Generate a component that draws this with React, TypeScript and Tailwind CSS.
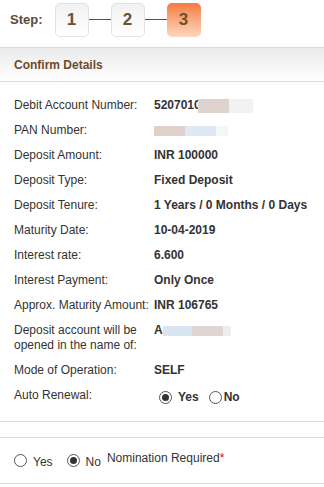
import React from 'react'

const rows: { label: React.ReactNode; value: React.ReactNode; tall?: boolean }[] = [
  {
    label: 'Debit Account Number:',
    value: (
      <span className="flex items-center">
        <span>520701</span>
        <span className="inline-block w-[4px] overflow-hidden">0</span>
        <span className="inline-block w-[31px] h-[14px] bg-[#dfd3cf]" />
        <span className="inline-block w-[24px] h-[14px] bg-[#f1f2f2]" />
      </span>
    ),
  },
  {
    label: 'PAN Number:',
    value: (
      <span className="flex items-center h-[15px]">
        <span className="inline-block w-[31px] h-[10px] bg-[#dfd0ca]" />
        <span className="inline-block w-[31px] h-[10px] bg-[#dfe9f2]" />
        <span className="inline-block w-[12px] h-[10px] bg-[#f2f9f2]" />
      </span>
    ),
  },
  { label: 'Deposit Amount:', value: 'INR 100000' },
  { label: 'Deposit Type:', value: 'Fixed Deposit' },
  { label: 'Deposit Tenure:', value: '1 Years / 0 Months / 0 Days' },
  { label: 'Maturity Date:', value: '10-04-2019' },
  { label: 'Interest rate:', value: '6.600' },
  { label: 'Interest Payment:', value: 'Only Once' },
  { label: 'Approx. Maturity Amount:', value: 'INR 106765' },
  {
    label: (
      <>
        Deposit account will be
        <br />
        opened in the name of:
      </>
    ),
    value: (
      <span className="flex items-center">
        <span>A</span>
        <span className="inline-block w-[29px] h-[10px] bg-[#d8e4f0]" />
        <span className="inline-block w-[31px] h-[10px] bg-[#dfd6d2]" />
        <span className="inline-block w-[8px] h-[10px] bg-[#eeeeea]" />
      </span>
    ),
    tall: true,
  },
  { label: 'Mode of Operation:', value: 'SELF' },
]

function Radio({ checked }: { checked?: boolean }) {
  return (
    <span className="inline-flex w-[13px] h-[13px] rounded-full border border-[#555] bg-white items-center justify-center">
      {checked && <span className="w-[7px] h-[7px] rounded-full bg-[#333]" />}
    </span>
  )
}

function StepBox({ n, active }: { n: number; active?: boolean }) {
  return (
    <div
      className={
        active
          ? 'w-[34px] h-[34px] rounded-[5px] bg-gradient-to-b from-[#f47a3c] to-[#fdd7bf] flex items-center justify-center text-[17px] font-bold text-[#6b5132]'
          : 'w-[34px] h-[34px] rounded-[5px] border border-[#e2e2e2] bg-gradient-to-b from-[#f2f2f2] to-white flex items-center justify-center text-[17px] font-bold text-[#6b5132]'
      }
    >
      {n}
    </div>
  )
}

export default function App() {
  return (
    <div className="relative w-[324px] h-[487px] bg-white overflow-hidden text-[12px] text-[#333] font-['Liberation_Sans',Arial,sans-serif]">
      {/* Steps */}
      <div className="flex items-center h-[38px] pl-[10px] pt-[1px]">
        <span className="text-[13px] font-bold text-[#5b4a3a] mr-[12px]">Step:</span>
        <StepBox n={1} />
        <span className="w-[22px] h-px bg-[#6b5132]" />
        <StepBox n={2} />
        <span className="w-[22px] h-px bg-[#6b5132]" />
        <StepBox n={3} active />
      </div>

      {/* Header */}
      <div className="mt-[9px] h-[35px] border-y border-[#dcdcdc] bg-gradient-to-b from-[#ebebeb] to-white flex items-center pl-[14px]">
        <span className="font-bold text-[#6b4b2b]">Confirm Details</span>
      </div>

      {/* Details */}
      <div className="pt-[11px] pl-[14px]">
        {rows.map((r, i) => (
          <div key={i} className={r.tall ? 'flex py-[5px] h-[40px] leading-[15px]' : 'flex py-[5px] h-[25px] leading-[15px]'}>
            <div className="w-[140px] shrink-0">{r.label}</div>
            <div className="font-bold">{r.value}</div>
          </div>
        ))}
        <div className="flex h-[25px] py-[5px] leading-[15px]">
          <div className="w-[145px] shrink-0">Auto Renewal:</div>
          <div className="flex items-center gap-[6px] mt-[3px] font-bold">
            <Radio checked />
            <span className="mr-[4px]">Yes</span>
            <Radio />
            <span className="-ml-[4px]">No</span>
          </div>
        </div>
      </div>

      <div className="mt-[13px] border-t border-[#dcdcdc] h-[16px]" />
      <div className="border-t border-[#dcdcdc] h-[46px] flex items-center pl-[14px] gap-[6px]">
        <Radio />
        <span className="mr-[8px] mt-[2px]">Yes</span>
        <Radio checked />
        <span className="mt-[2px]">No</span>
        <span className="-mt-[6px]">
          Nomination Required<span className="text-[#e00]">*</span>
        </span>
      </div>
      <div className="border-t border-[#dcdcdc]" />
    </div>
  )
}
